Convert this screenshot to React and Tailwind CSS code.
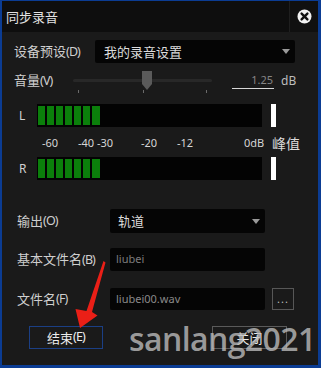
import React from "react";

const CJK = { fontFamily: '"Noto Sans CJK SC", "Noto Sans", sans-serif' };
const NUM = { fontFamily: '"Noto Sans", "Noto Sans CJK SC", sans-serif' };

function Tri() {
  return (
    <svg width="8" height="5" viewBox="0 0 8 5" className="shrink-0">
      <path d="M0 0 L8 0 L4 5 Z" fill="#9a9a9a" />
    </svg>
  );
}

function Lbl({ zh, k }) {
  return (
    <>
      {zh}
      <span className="text-[12.5px] tracking-[-0.9px] relative top-[-0.5px]" style={NUM}>({k})</span>
    </>
  );
}

function Meter({ label }) {
  return (
    <div className="flex items-center h-[23px]">
      <div className="w-[35px] pl-[17px] text-[12px] text-[#d0d0d0]" style={NUM}>{label}</div>
      <div className="w-[225px] h-[23px] bg-[#030303] pl-[1px] py-[2px] flex gap-[2px]">
        {[0, 1, 2, 3, 4, 5, 6].map((i) => (
          <div key={i} className={i === 6 ? "w-[8px] h-full bg-[#0b7f0b]" : "w-[7px] h-full bg-[#0b7f0b]"} />
        ))}
      </div>
      <div className="ml-[9px] w-[5px] h-[23px] bg-white" />
    </div>
  );
}

export default function App() {
  return (
    <div className="w-[321px] h-[368px] bg-[#0b3c93] pl-[2px] pr-[3px] pb-[3px] pt-[1px] relative overflow-hidden" style={CJK}>
      <div className="w-full h-full bg-[#1a1a1a] flex flex-col">
        {/* title bar */}
        <div className="h-[31px] bg-[#0e0e0e] flex items-center shrink-0">
          <div className="pl-[4px] flex-1 text-[13px] text-[#e2e2e2]">同步录音</div>
          <div className="w-[29px] h-full border-l border-[#1f1f1f] flex items-center justify-center bg-[#101010]">
            <svg width="15" height="15" viewBox="0 0 15 15">
              <circle cx="7.5" cy="7.5" r="7" fill="#f2f2f2" />
              <path d="M4.6 4.6 L10.4 10.4 M10.4 4.6 L4.6 10.4" stroke="#111" strokeWidth="2.4" strokeLinecap="round" />
            </svg>
          </div>
        </div>

        {/* preset row */}
        <div className="mt-[8px] h-[23px] flex items-center">
          <div className="w-[93px] pl-[12px] text-[13px] text-[#cfcfcf]"><Lbl zh="设备预设" k="D" /></div>
          <div className="w-[200px] h-[23px] bg-[#050505] rounded-[2px] flex items-center pl-[9px] pr-[5px]">
            <span className="flex-1 text-[13px] text-[#dcdcdc]">我的录音设置</span>
            <Tri />
          </div>
        </div>

        {/* volume row */}
        <div className="mt-[8px] h-[19px] flex items-center">
          <div className="w-[71px] pl-[12px] text-[13px] text-[#cfcfcf]"><Lbl zh="音量" k="V" /></div>
          <div className="relative w-[139px] h-[19px] flex items-center">
            <div className="w-full h-[3px] rounded-full bg-[#282828]" />
            <svg className="absolute left-[68px] top-0" width="12" height="19" viewBox="0 0 12 19">
              <path d="M1 0 H11 V13 L6 19 L1 13 Z" fill="#5a5a5a" />
            </svg>
          </div>
          <div className="ml-[20px] w-[42px] h-[17px] border-b border-[#d8d8d8] text-right text-[11px] leading-[16px] text-[#858585] pr-[1px]" style={NUM}>1.25</div>
          <div className="ml-[7px] text-[12px] text-[#bdbdbd]" style={NUM}>dB</div>
        </div>

        {/* ticks */}
        <div className="h-[4px] flex">
          <div className="ml-[76px] w-px h-[3px] bg-[#6a6a6a]" />
          <div className="ml-[64px] w-px h-[3px] bg-[#6a6a6a]" />
          <div className="ml-[62px] w-px h-[3px] bg-[#6a6a6a]" />
        </div>

        <div className="mt-[10px]"><Meter label="L" /></div>

        {/* scale */}
        <div className="mt-[7px] h-[18px] flex items-center text-[11px] text-[#d6d6d6]" style={NUM}>
          <span className="ml-[40px] w-[36px]">-60</span>
          <span className="w-[19px]">-40</span>
          <span className="w-[44px]">-30</span>
          <span className="w-[36px]">-20</span>
          <span className="w-[67px]">-12</span>
          <span className="w-[28px]">0dB</span>
          <span className="text-[14px] text-[#dadada]" style={CJK}>峰值</span>
        </div>

        <div className="mt-[5px]"><Meter label="R" /></div>

        {/* output row */}
        <div className="mt-[29px] h-[24px] flex items-center">
          <div className="w-[108px] pl-[15px] text-[13px] text-[#cfcfcf]"><Lbl zh="输出" k="O" /></div>
          <div className="w-[155px] h-[24px] bg-[#050505] rounded-[2px] flex items-center pl-[8px] pr-[5px]">
            <span className="flex-1 text-[13px] text-[#dcdcdc]">轨道</span>
            <Tri />
          </div>
        </div>

        {/* base name */}
        <div className="mt-[15px] h-[23px] flex items-center">
          <div className="w-[108px] pl-[15px] text-[13px] text-[#cfcfcf]"><Lbl zh="基本文件名" k="B" /></div>
          <div className="w-[155px] h-[23px] bg-[#050505] rounded-[2px] flex items-center pl-[6px] text-[11px] text-[#7d7d7d]" style={NUM}>liubei</div>
        </div>

        {/* file name */}
        <div className="mt-[17px] h-[22px] flex items-center">
          <div className="w-[108px] pl-[15px] text-[13px] text-[#cfcfcf]"><Lbl zh="文件名" k="F" /></div>
          <div className="w-[155px] h-[22px] bg-[#050505] rounded-[2px] flex items-center pl-[6px] text-[11px] text-[#8a8a8a]" style={NUM}>liubei00.wav</div>
          <div className="ml-[7px] w-[22px] h-[22px] border border-[#575757] flex items-center justify-center text-[11px] text-[#bdbdbd] tracking-[1px]" style={NUM}>...</div>
        </div>

        {/* buttons */}
        <div className="mt-[16px] h-[23px] flex items-center">
          <div className="ml-[27px] w-[74px] h-[23px] border border-[#1b3f85] flex items-center justify-center text-[13px] text-[#ededed]"><Lbl zh="结束" k="E" /></div>
          <div className="ml-[109px] w-[75px] h-[23px] border border-[#5a5a5a] flex items-center justify-center text-[13px] text-[#ededed]">关闭</div>
        </div>
      </div>

      {/* watermark */}
      <div className="absolute left-[129px] top-[319px] text-[32px] leading-[40px] font-semibold text-[#bdbdbd]/80 tracking-[-0.6px] pointer-events-none" style={{ fontFamily: '"Open Sans", "Noto Sans", sans-serif' }}>sanlang2021</div>

      {/* red arrow */}
      <svg className="absolute left-0 top-0 pointer-events-none" width="321" height="368" viewBox="0 0 321 368">
        <path d="M103.5 261 L105.5 262.5 L92 312 L97.5 315.5 L80 328 L75.5 309 L86.5 311 Z" fill="#ea1f17" />
      </svg>
    </div>
  );
}
